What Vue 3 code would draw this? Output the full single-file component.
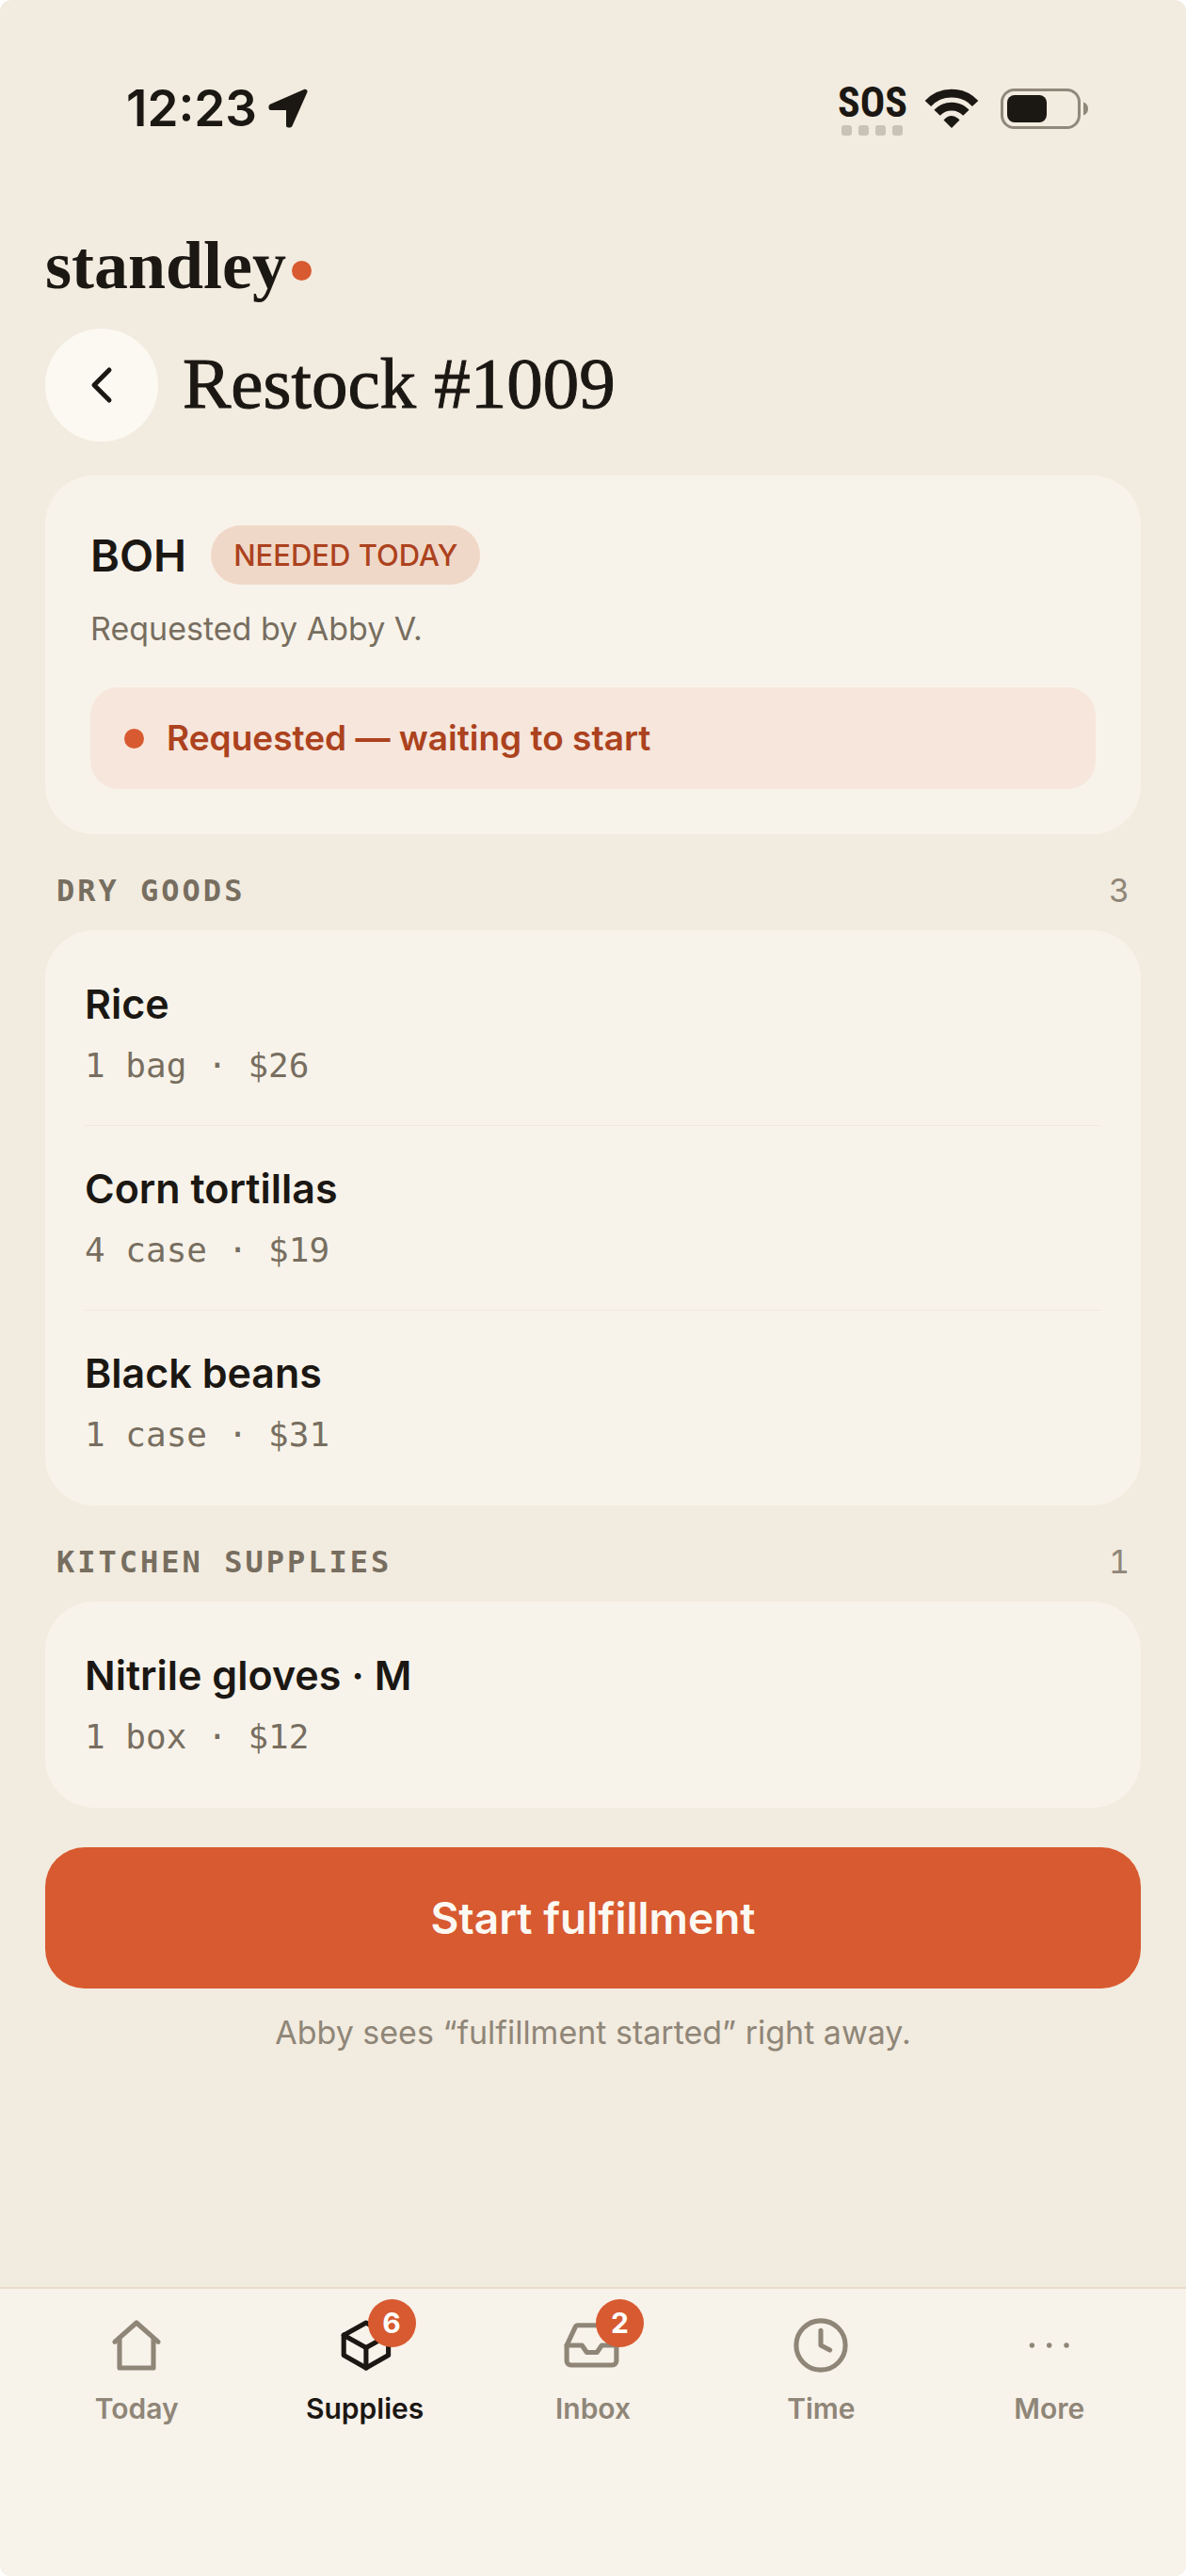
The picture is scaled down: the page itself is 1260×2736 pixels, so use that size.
<script setup>
import { ref } from 'vue'

const groups = [
  {
    name: 'Dry goods',
    items: [
      { name: 'Rice', detail: '1 bag · $26' },
      { name: 'Corn tortillas', detail: '4 case · $19' },
      { name: 'Black beans', detail: '1 case · $31' }
    ]
  },
  {
    name: 'Kitchen supplies',
    items: [{ name: 'Nitrile gloves · M', detail: '1 box · $12' }]
  }
]

const tabs = [
  { id: 'today', label: 'Today', paths: ['M4.3 10.8 12 4l7.7 6.8', 'M6 9.4V20h12V9.4'] },
  {
    id: 'supplies',
    label: 'Supplies',
    badge: 6,
    paths: ['M12.3 4l7.9 4.4v7.1l-7.9 4.5-7.9-4.5V8.4z', 'M4.4 8.4l7.9 4.4 7.9-4.4', 'M12.3 12.8V20']
  },
  {
    id: 'inbox',
    label: 'Inbox',
    badge: 2,
    paths: [
      'M2.7 12h5.4l1.7 2.5h3.6l1.7-2.5h5.2',
      'M6.6 4.9h9.8a.9.9 0 0 1 .8.5l3.1 6.6v5.5a1.5 1.5 0 0 1-1.5 1.5H4.2a1.5 1.5 0 0 1-1.5-1.5V12l3.1-6.6a.9.9 0 0 1 .8-.5z'
    ]
  },
  { id: 'time', label: 'Time', paths: ['M3.3 12a8.7 8.7 0 1 0 17.4 0a8.7 8.7 0 1 0-17.4 0z', 'M12 6.8V12l3.2 1.7'] },
  { id: 'more', label: 'More', dots: [5.8, 11.9, 18] }
]

const activeTab = ref('supplies')
</script>

<template>
  <div class="page">
    <div class="status-bar">
      <div class="clock">
        <span>12:23</span>
        <svg width="42" height="42" viewBox="0 0 42 42" fill="currentColor" stroke="currentColor" stroke-width="5" stroke-linejoin="round">
          <path d="M39 3.2L3 19v1.4h18.5V39h1.6z" />
        </svg>
      </div>
      <div class="signals">
        <div class="sos">
          <span class="sos-text">SOS</span>
          <div class="sos-dots"><i v-for="n in 4" :key="n"></i></div>
        </div>
        <svg class="wifi" width="58" height="42" viewBox="0 0 58 42">
          <g fill="none" stroke="currentColor" stroke-width="8.8">
            <path d="M3.9 15.9A34.5 34.5 0 0 1 54.1 15.9" />
            <path d="M13.6 25.8A21.2 21.2 0 0 1 44.4 25.8" />
          </g>
          <path d="M29 42L20.5 33.4Q29 24.6 37.5 33.4z" fill="currentColor" />
        </svg>
        <svg width="93" height="43" viewBox="0 0 93 43">
          <rect x="1.5" y="1.5" width="82" height="40" rx="13" fill="none" stroke="#8f887b" stroke-width="3" />
          <rect x="7" y="7" width="42" height="29" rx="8" fill="currentColor" />
          <path d="M88 14.5c3 1 5 3.6 5 7s-2 6-5 7z" fill="#8f887b" />
        </svg>
      </div>
    </div>

    <main class="content">
      <div class="brand">standley<span class="brand-dot"></span></div>

      <div class="title-row">
        <button class="back" type="button" aria-label="Back">
          <svg width="60" height="60" viewBox="0 0 60 60" fill="none" stroke="currentColor" stroke-width="5" stroke-linecap="round" stroke-linejoin="round">
            <path d="M38 14L22 30l16 16" />
          </svg>
        </button>
        <h1>Restock #1009</h1>
      </div>

      <section class="card summary">
        <div class="summary-head">
          <h2>BOH</h2>
          <span class="pill">NEEDED TODAY</span>
        </div>
        <p class="requester">Requested by Abby V.</p>
        <div class="state">
          <span class="state-dot"></span>
          Requested — waiting to start
        </div>
      </section>

      <section v-for="group in groups" :key="group.name">
        <div class="group-head">
          <h3>{{ group.name }}</h3>
          <span>{{ group.items.length }}</span>
        </div>
        <ul class="card items">
          <li v-for="item in group.items" :key="item.name">
            <p class="item-name">{{ item.name }}</p>
            <p class="item-detail">{{ item.detail }}</p>
          </li>
        </ul>
      </section>

      <button class="start" type="button">Start fulfillment</button>
      <p class="hint">Abby sees “fulfillment started” right away.</p>
    </main>

    <nav class="tabs">
      <a
        v-for="tab in tabs"
        :key="tab.id"
        href="#"
        class="tab"
        :class="{ active: tab.id === activeTab }"
        @click.prevent="activeTab = tab.id"
      >
        <span class="tab-icon">
          <svg width="72" height="72" viewBox="0 0 24 24" fill="none" stroke="currentColor" stroke-width="1.7" stroke-linecap="round" stroke-linejoin="round">
            <path v-for="d in tab.paths" :key="d" :d="d" />
            <circle v-for="x in tab.dots" :key="x" :cx="x" cy="12" r="0.9" fill="currentColor" stroke="none" />
          </svg>
          <span v-if="tab.badge" class="badge">{{ tab.badge }}</span>
        </span>
        <span class="tab-label">{{ tab.label }}</span>
      </a>
    </nav>
  </div>
</template>

<style>
body {
  margin: 0;
  background: #fff;
}
</style>

<style scoped>
.page {
  display: flex;
  flex-direction: column;
  min-height: 100vh;
  border-radius: 12px;
  overflow: hidden;
  background: #f2ebdf;
  color: #1b1713;
  font-family: Inter, "Liberation Sans", sans-serif;
}

h1,
h2,
h3,
p,
ul {
  margin: 0;
  padding: 0;
}

button {
  border: 0;
  padding: 0;
  font-family: inherit;
  cursor: pointer;
}

/* Status bar */
.status-bar {
  display: flex;
  justify-content: space-between;
  align-items: center;
  height: 48px;
  padding: 91px 104px 0 134px;
}

.clock {
  display: flex;
  align-items: center;
  gap: 12px;
  font-size: 53px;
  font-weight: 600;
}

.signals {
  display: flex;
  align-items: center;
}

.sos {
  display: flex;
  flex-direction: column;
  align-items: center;
  gap: 7px;
  padding-top: 6px;
}

.sos-text {
  font-family: "Liberation Sans Narrow", "Roboto Condensed", "Liberation Sans", sans-serif;
  font-size: 44px;
  font-weight: 700;
  line-height: 34px;
}

.sos-dots {
  display: flex;
  gap: 7px;
}

.sos-dots i {
  width: 11px;
  height: 11px;
  border-radius: 3px;
  background: #c9c2b6;
}

.wifi {
  margin: 0 23px 0 18px;
}

/* Content */
.content {
  flex: 1;
  padding: 106px 48px 48px;
}

.brand {
  display: flex;
  align-items: center;
  gap: 6px;
  font-family: "Liberation Serif", serif;
  font-size: 72px;
  font-weight: 700;
  line-height: 74px;
}

.brand-dot {
  width: 21px;
  height: 21px;
  margin-top: 10px;
  border-radius: 50%;
  background: #d85a30;
}

.title-row {
  display: flex;
  align-items: center;
  gap: 26px;
  margin: 30px 0 36px;
}

.back {
  display: flex;
  align-items: center;
  justify-content: center;
  width: 120px;
  height: 120px;
  border-radius: 50%;
  background: #fcf9f3;
  color: inherit;
}

h1 {
  padding-bottom: 4px;
  font-family: "Liberation Serif", serif;
  font-size: 77px;
  font-weight: 400;
  line-height: 76px;
  -webkit-text-stroke: 1px currentColor;
}

.card {
  border-radius: 52px;
  background: #f8f3ea;
}

.summary {
  padding: 48px;
}

.summary-head {
  display: flex;
  align-items: center;
  gap: 26px;
  height: 72px;
}

h2 {
  font-size: 47px;
  font-weight: 600;
}

.pill {
  padding: 0 24px;
  border-radius: 32px;
  background: #f0d8c8;
  color: #ac421e;
  font-size: 31px;
  font-weight: 500;
  line-height: 63px;
}

.requester {
  margin-top: 16px;
  color: #776e60;
  font-size: 34px;
  line-height: 53px;
}

.state {
  display: flex;
  align-items: center;
  gap: 24px;
  margin-top: 36px;
  padding: 0 36px;
  border-radius: 30px;
  background: #f6e6db;
  color: #ac421e;
  font-size: 37px;
  font-weight: 600;
  line-height: 108px;
}

.state-dot {
  width: 21px;
  height: 21px;
  border-radius: 50%;
  background: #d85a30;
}

.group-head {
  display: flex;
  justify-content: space-between;
  padding: 36px 12px 18px;
  color: #8f8678;
  font-size: 34px;
  font-variant-numeric: tabular-nums;
  line-height: 48px;
}

h3 {
  color: #776e60;
  font-family: "DejaVu Sans Mono", monospace;
  font-size: 32px;
  font-weight: 700;
  letter-spacing: 3px;
  text-transform: uppercase;
}

.items {
  padding: 12px 42px;
  list-style: none;
}

.items li {
  padding: 38px 0 39px;
}

.items li + li {
  border-top: 1px solid #f1e9db;
}

.item-name {
  font-size: 43px;
  font-weight: 600;
  line-height: 56px;
}

.item-detail {
  margin-top: 14px;
  color: #776e60;
  font-family: "DejaVu Sans Mono", monospace;
  font-size: 36px;
  line-height: 48px;
}

.start {
  width: 100%;
  height: 150px;
  margin-top: 42px;
  border-radius: 42px;
  background: #d85a30;
  color: #fcf9f3;
  font-size: 46px;
  font-weight: 600;
}

.hint {
  margin-top: 20px;
  color: #8f8678;
  font-size: 34px;
  line-height: 54px;
  text-align: center;
}

/* Bottom tabs */
.tabs {
  display: flex;
  padding: 24px 24px 160px;
  border-top: 2px solid #e9dccb;
  background: #f7f2ea;
}

.tab {
  display: flex;
  flex: 1;
  flex-direction: column;
  align-items: center;
  gap: 13px;
  color: #8f8678;
  text-decoration: none;
}

.tab.active {
  color: #1b1713;
}

.tab-icon {
  position: relative;
  height: 72px;
}

.badge {
  position: absolute;
  top: -13px;
  left: 39px;
  width: 51px;
  border-radius: 50%;
  background: #d85a30;
  color: #fff;
  font-size: 30px;
  font-weight: 700;
  line-height: 51px;
  text-align: center;
}

.tab-label {
  font-size: 30px;
  font-weight: 600;
  line-height: 36px;
}
</style>
